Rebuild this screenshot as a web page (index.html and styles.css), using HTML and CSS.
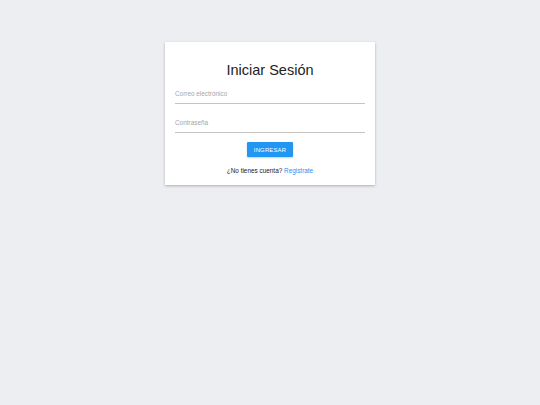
FILE: index.html
```html
<!DOCTYPE html>
<html lang="es">
<head>
<meta charset="utf-8">
<title>Iniciar Sesión</title>
<link rel="stylesheet" href="styles.css">
</head>
<body>
<div class="card">
  <h1 class="title">Iniciar Sesión</h1>
  <div class="field field-first">
    <label class="label">Correo electrónico</label>
  </div>
  <div class="field">
    <label class="label">Contraseña</label>
  </div>
  <div class="actions">
    <button class="btn">INGRESAR</button>
  </div>
  <p class="footer">¿No tienes cuenta? <a class="link" href="#">Registrate</a></p>
</div>
</body>
</html>
```

FILE: styles.css
```css
html, body {
  margin: 0;
  padding: 0;
}
body {
  background: #eceef1;
  font-family: "Liberation Sans", Arial, sans-serif;
  color: #333;
  width: 540px;
  height: 405px;
}
.card {
  width: 190px;
  margin: 42px auto 0;
  background: #fff;
  padding: 19px 10px 10px;
  box-shadow: 0 1px 3px rgba(0,0,0,0.18), 0 1px 2px rgba(0,0,0,0.10);
}
.title {
  margin: 0;
  font-size: 14.5px;
  line-height: 18px;
  font-weight: 400;
  text-align: center;
  color: #222;
}
.field {
  margin-top: 15px;
  padding-bottom: 5px;
  border-bottom: 1px solid #c4c4c4;
}
.field-first {
  margin-top: 11px;
}
.label {
  display: block;
  font-size: 6.4px;
  line-height: 8px;
  color: #a6a6a6;
}
.actions {
  display: flex;
  justify-content: center;
  margin-top: 9px;
}
.btn {
  height: 15px;
  padding: 0 7px;
  border: none;
  border-radius: 1px;
  background: #2196f3;
  color: #fff;
  font-family: "Liberation Sans", Arial, sans-serif;
  font-size: 5.9px;
  letter-spacing: 0.2px;
  box-shadow: 0 1px 2px rgba(0,0,0,0.2);
}
.footer {
  margin: 10px 0 0;
  font-size: 6.4px;
  line-height: 8px;
  text-align: center;
  color: #222;
}
.link {
  color: #2196f3;
  text-decoration: none;
}
```
